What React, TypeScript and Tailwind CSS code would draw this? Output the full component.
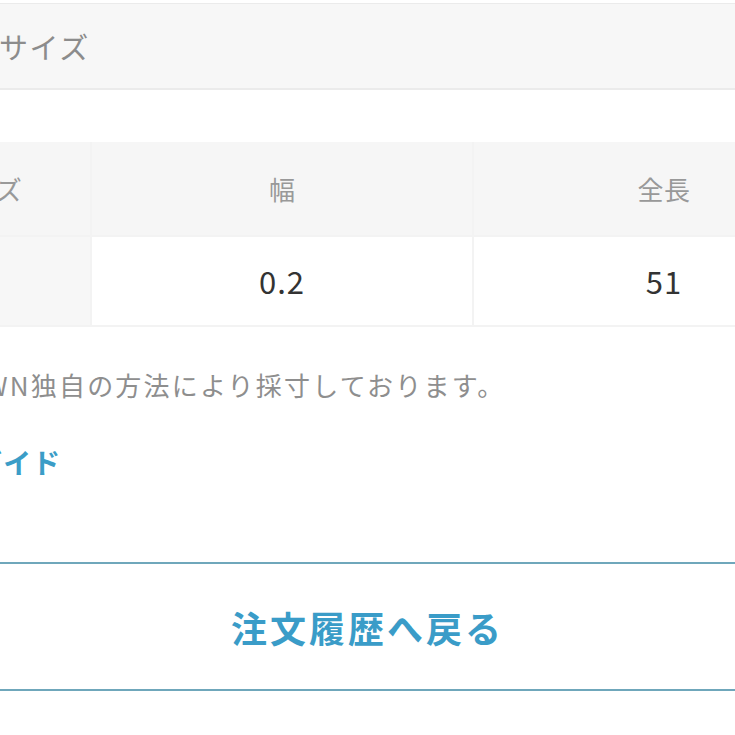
export default function App() {
  const font = { fontFamily: '"Noto Sans CJK JP", "Noto Sans", sans-serif' }
  return (
    <div style={font} className="w-[735px] h-[735px] overflow-hidden bg-white">
      <div className="h-[3px]" />
      {/* size title bar */}
      <div className="h-[87px] bg-[#f7f7f7] border-t border-b-2 border-[#ebebeb] flex items-center">
        <span className="text-[29px] leading-none tracking-[1.5px] text-[#8c8c8c] -ml-[1px]">サイズ</span>
      </div>

      {/* size table */}
      <div className="mt-[52px] -ml-[124px] w-[980px] bg-[#f3f3f3] pb-[2px] grid grid-cols-[214px_380px_380px] gap-x-[2px] gap-y-[2px]">
        <div className="h-[93px] bg-[#f6f6f6] flex items-center justify-center text-[26px] tracking-[0.5px] text-[#999]">サイズ</div>
        <div className="h-[93px] bg-[#f6f6f6] flex items-center justify-center text-[26px] text-[#999]">幅</div>
        <div className="h-[93px] bg-[#f6f6f6] flex items-center justify-center text-[26px] tracking-[0.5px] text-[#999]">全長</div>
        <div className="h-[88px] bg-[#f7f7f7]" />
        <div className="h-[88px] bg-white flex items-center justify-center text-[31px] tracking-[1px] text-[#333]">0.2</div>
        <div className="h-[88px] bg-white flex items-center justify-center text-[31px] tracking-[1px] text-[#333]">51</div>
      </div>

      <p className="mt-[38px] -ml-[130px] text-[26px] leading-[39px] tracking-[2.2px] text-[#8e8e8e] whitespace-nowrap">
        ZOZOTOWN独自の方法により採寸しております。
      </p>

      <a className="block mt-[39px] -ml-[112px] text-[28px] leading-[39px] tracking-[1px] font-bold text-[#3b9dc7] whitespace-nowrap">
        サイズガイド
      </a>

      <button className="mt-[80px] w-full h-[129px] border-y-2 border-[#6fa7bb] bg-white flex items-center justify-center">
        <span className="text-[36px] font-bold text-[#3a9cc8] tracking-[3px]">注文履歴へ戻る</span>
      </button>
    </div>
  )
}
